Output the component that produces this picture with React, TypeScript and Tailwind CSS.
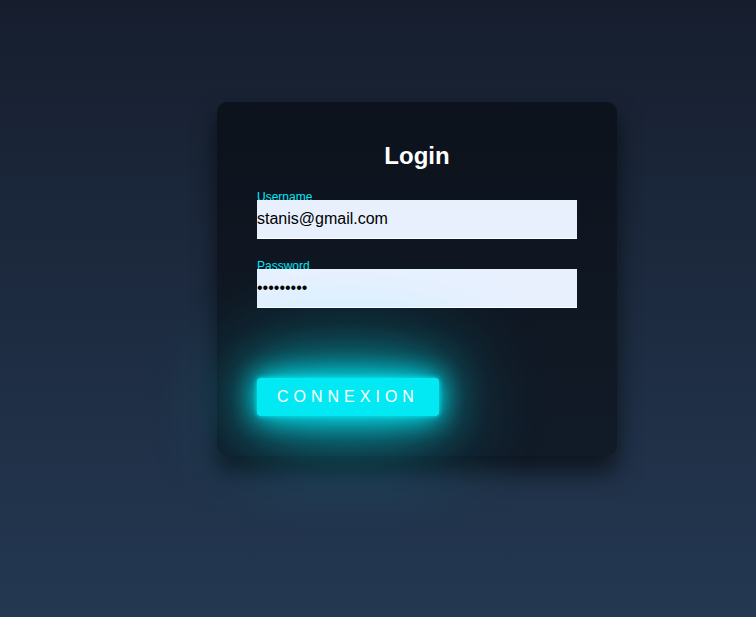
import React from "react";

export default function App() {
  return (
    <div
      className="min-h-[617px] w-full bg-[linear-gradient(#161e2e,#243852)] pt-[102px] pl-[217px]"
      style={{ fontFamily: '"Liberation Sans", Arial, sans-serif' }}
    >
      <div className="w-[400px] rounded-[10px] bg-[rgba(0,0,0,0.45)] p-10 shadow-[0_15px_25px_rgba(0,0,0,0.6)]">
        <h2 className="text-center text-[24px] font-bold leading-[28px] text-white">Login</h2>
        <div className="mt-[21px] flex flex-col">
          <label className="block text-[12px] leading-[12px] text-[#03e9f4]">Username</label>
          <input
            readOnly
            value="stanis@gmail.com"
            className="-mt-[3px] h-[39px] w-full border-0 border-b border-white bg-[#e8f0fe] p-0 text-[16px] text-black outline-none"
          />
          <label className="mt-[21px] block text-[12px] leading-[12px] text-[#03e9f4]">Password</label>
          <input
            readOnly
            type="password"
            value="password1"
            className="-mt-[3px] h-[39px] w-full border-0 border-b border-white bg-[#e8f0fe] p-0 text-[16px] text-black outline-none"
          />
        </div>
        <div className="mt-[70px] flex">
          <button className="h-[38px] rounded-[4px] bg-[#03e9f4] px-5 text-[16px] tracking-[5px] text-white shadow-[0_0_5px_#03e9f4,0_0_25px_#03e9f4,0_0_50px_#03e9f4,0_0_100px_#03e9f4]">
            CONNEXION
          </button>
        </div>
      </div>
    </div>
  );
}
